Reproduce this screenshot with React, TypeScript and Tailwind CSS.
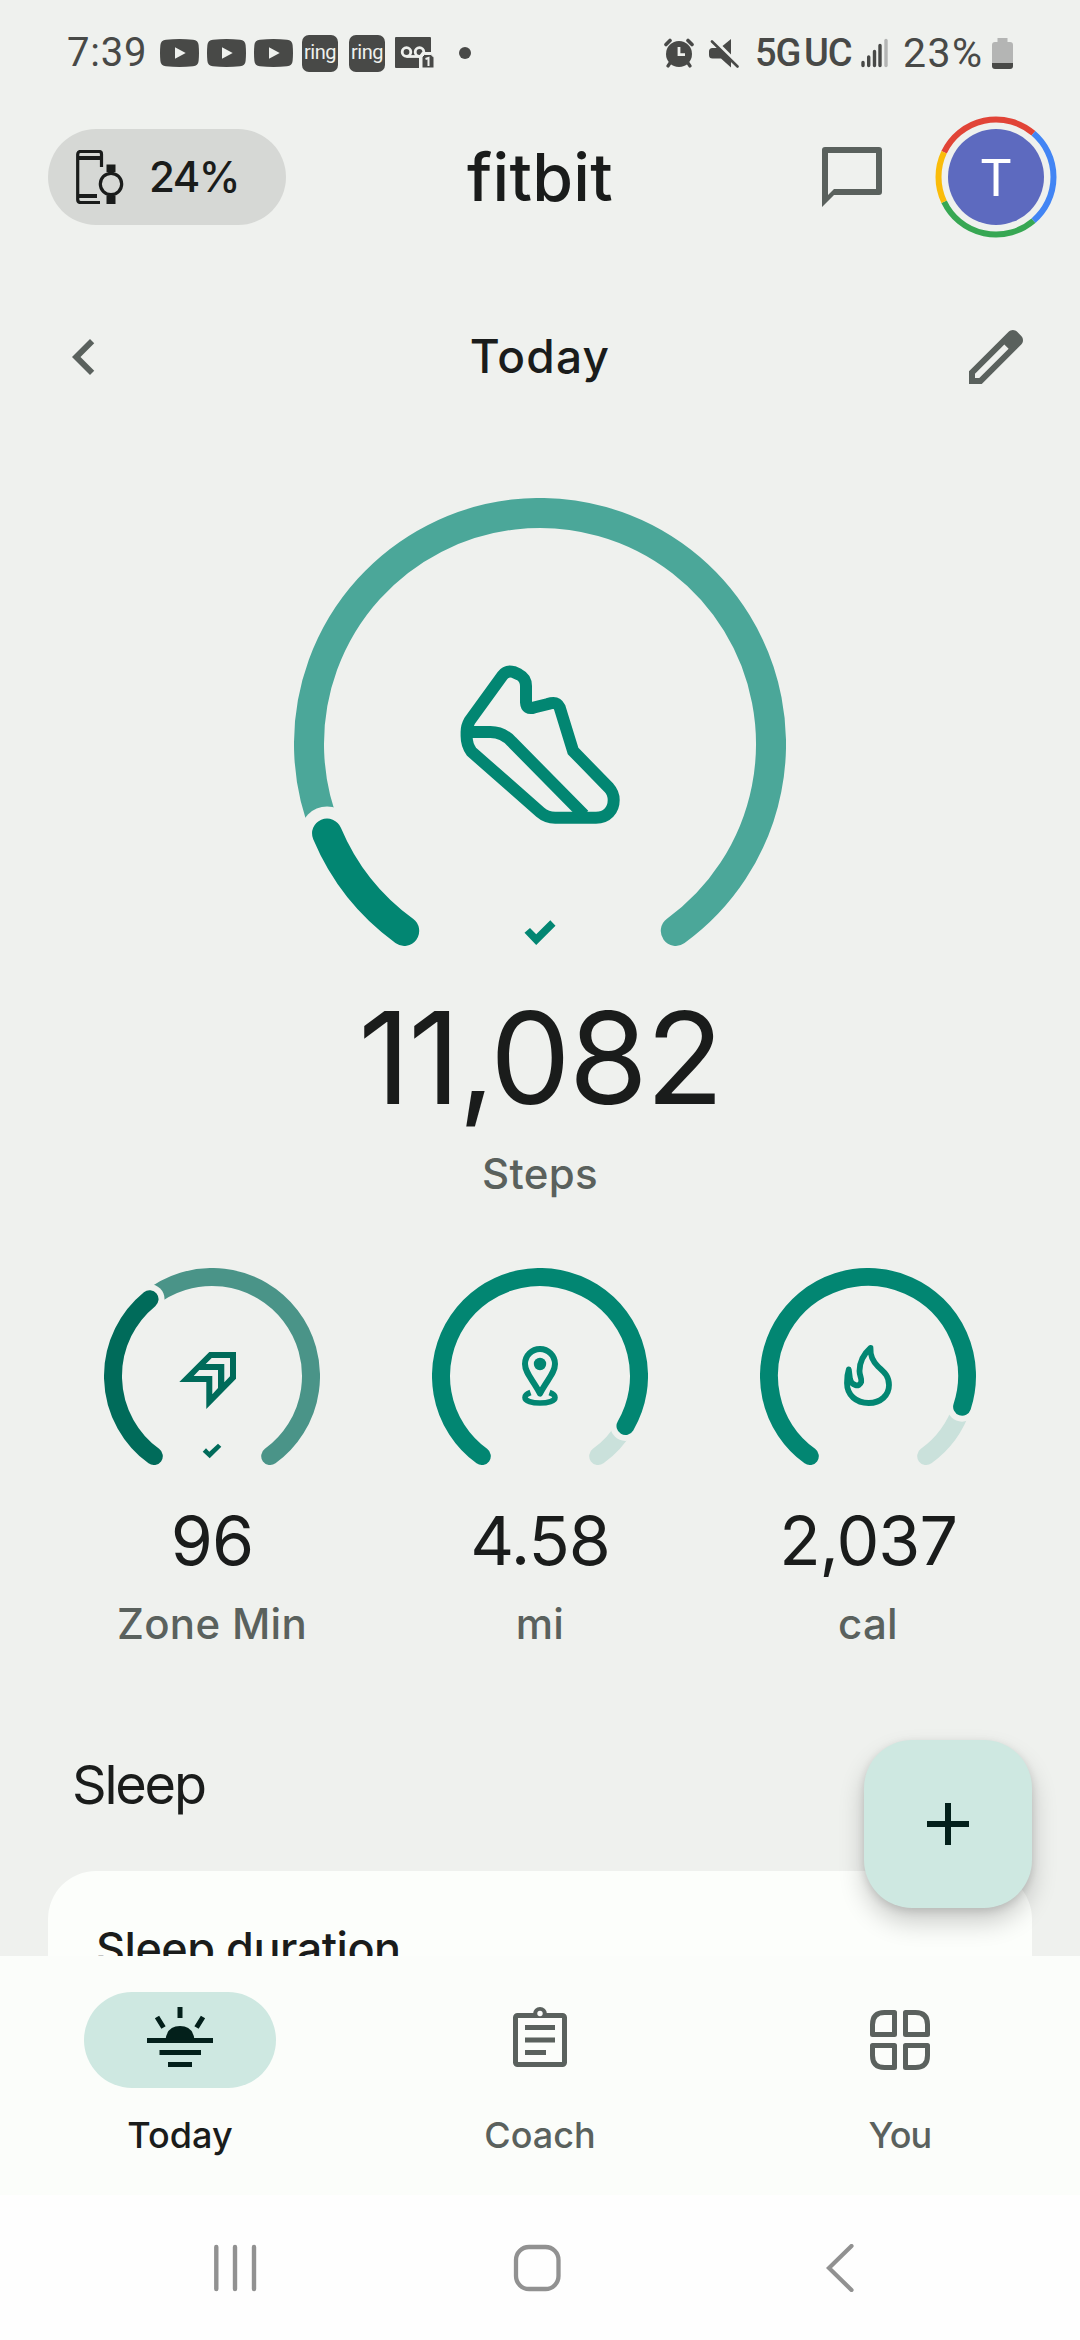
import React from 'react';

type Point = { x: number; y: number };

// Angles run clockwise from the bottom of the dial, in degrees.
const pointOnDial = (size: number, radius: number, angle: number): Point => {
  const rad = (angle * Math.PI) / 180;
  return {
    x: size / 2 - radius * Math.sin(rad),
    y: size / 2 + radius * Math.cos(rad),
  };
};

const arcPath = (size: number, radius: number, from: number, to: number) => {
  const start = pointOnDial(size, radius, from);
  const end = pointOnDial(size, radius, to);
  const large = to - from > 180 ? 1 : 0;
  return `M${start.x} ${start.y}A${radius} ${radius} 0 ${large} 1 ${end.x} ${end.y}`;
};

const START = 36;
const END = 324;

interface GaugeProps {
  size: number;
  height: number;
  stroke: number;
  gap: number;
  split: number;
  color: string;
  track: string;
  children: React.ReactNode;
}

const Gauge: React.FC<GaugeProps> = ({ size, height, stroke, gap, split, color, track, children }) => {
  const radius = (size - stroke) / 2;
  const knob = pointOnDial(size, radius, split);
  return (
    <svg width={size} height={height} viewBox={`0 0 ${size} ${height}`} fill="none" className="shrink-0">
      <path d={arcPath(size, radius, split, END)} stroke={track} strokeWidth={stroke} strokeLinecap="round" />
      <circle cx={knob.x} cy={knob.y} r={stroke / 2 + gap} fill="#eff1ee" />
      <path d={arcPath(size, radius, START, split)} stroke={color} strokeWidth={stroke} strokeLinecap="round" />
      {children}
    </svg>
  );
};

const YoutubeIcon = () => (
  <svg width="39" height="28" viewBox="0 0 39 28">
    <path
      fillRule="evenodd"
      fill="#484947"
      d="M6 .7Q19.500-.5 33 .7Q38.200 1.200 38.600 6Q39.400 14 38.600 22Q38.200 26.800 33 27.300Q19.500 28.500 6 27.300Q.8 26.800 .4 22Q-.4 14 .4 6Q.8 1.200 6 .7ZM15 8.300V19.700L25.700 14Z"
    />
  </svg>
);

const RingIcon = () => (
  <div className="flex h-[37px] w-9 justify-center rounded-[7px] bg-[#484947]">
    <span className="font-['Roboto',sans-serif] text-[20px] leading-[34px] tracking-[-0.5px] text-[#eff1ee]">ring</span>
  </div>
);

const VoicemailIcon = () => (
  <svg width="40" height="32" viewBox="0 0 40 32" fill="none">
    <path d="M1 0H35q1 0 1 1V15H27L24 19V31H1q-1 0-1-1V1q0-1 1-1Z" fill="#484947" />
    <g stroke="#eff1ee" strokeWidth="2.800">
      <circle cx="11.500" cy="15" r="4.300" />
      <circle cx="24.500" cy="15" r="4.300" />
      <path d="M11.500 19.500H24" />
    </g>
    <path d="M29.500 17.500H36L39 20.500V31H27V20Z" fill="#484947" stroke="#eff1ee" strokeWidth="1" />
    <path d="M30.500 22L33.500 21V29" stroke="#eff1ee" strokeWidth="2" />
  </svg>
);

const AlarmIcon = () => (
  <svg width="30" height="30" viewBox="0 0 30 30" fill="none" stroke="#484947">
    <circle cx="15" cy="16" r="13" fill="#484947" stroke="none" />
    <path d="M2 6.500L6 2.500M28 6.500L24 2.500" strokeWidth="3.600" strokeLinecap="round" />
    <path d="M6 25L4 28M24 25L26 28" strokeWidth="3.200" strokeLinecap="round" />
    <path d="M15 9V16.700H21" stroke="#eff1ee" strokeWidth="2.800" />
  </svg>
);

const MuteIcon = () => (
  <svg width="30" height="31" viewBox="0 0 30 31">
    <path d="M22 1V16.500L13.500 8Z" fill="#484947" />
    <path d="M3.500 10H9.500L22 22V29.500L12 20.500H3.500Q0 20.500 0 17V13.500Q0 10 3.500 10Z" fill="#484947" />
    <path d="M3 3.500L28.500 28.500" stroke="#484947" strokeWidth="2.600" strokeLinecap="round" />
  </svg>
);

const SignalIcon = () => (
  <svg width="28" height="30" viewBox="0 0 28 30" strokeWidth="3.400" strokeLinecap="round">
    <path d="M2 24.500V27.500M7.700 19V27.500M13.500 13.500V27.500M19 7.500V27.500" stroke="#484947" />
    <path d="M25 2.500V27.500" stroke="#b4b5b4" />
  </svg>
);

const BatteryIcon = () => (
  <svg width="21" height="31" viewBox="0 0 21 31">
    <path d="M5.500 0H15.500V4H18Q21 4 21 7V25H0V7Q0 4 3 4H5.500Z" fill="#b4b5b4" />
    <path d="M0 25H21V28Q21 31 18 31H3Q0 31 0 28Z" fill="#484947" />
  </svg>
);

const StatusBar = () => (
  <div className="flex h-[106px] shrink-0 items-center justify-between pr-[67px] pl-[67px] font-['Roboto',sans-serif] text-[#484947]">
    <div className="flex items-center">
      <span className="w-[93px] text-[40px] leading-none tracking-[0.8px]">7:39</span>
      <div className="flex gap-2">
        <YoutubeIcon />
        <YoutubeIcon />
        <YoutubeIcon />
      </div>
      <div className="ml-[9px] flex gap-[11px]">
        <RingIcon />
        <RingIcon />
      </div>
      <div className="ml-[10px]">
        <VoicemailIcon />
      </div>
      <div className="ml-6 h-3 w-3 rounded-full bg-[#484947]" />
    </div>
    <div className="flex items-center">
      <AlarmIcon />
      <div className="ml-[15px]">
        <MuteIcon />
      </div>
      <span className="ml-4 w-[106px] text-[38px] leading-none font-medium tracking-[-1px] [word-spacing:-5px] whitespace-nowrap">
        5G UC
      </span>
      <SignalIcon />
      <span className="ml-[14px] w-[89px] text-[41px] leading-none tracking-[1.500px]">23%</span>
      <BatteryIcon />
    </div>
  </div>
);

const DevicesIcon = () => (
  <svg width="48" height="54" viewBox="0 0 48 54" fill="none" stroke="#1a1c1b">
    <path d="M25.500 17V4Q25.500 1.500 23 1.500H4.500Q1.700 1.500 1.700 4.500V49.500Q1.700 52.500 4.500 52.500H24" strokeWidth="3.200" />
    <path d="M2 8H26M2 46H21" strokeWidth="4" />
    <circle cx="35" cy="34" r="10.700" strokeWidth="3.200" />
    <path d="M30.500 14.500H39.500V22H30.500ZM30.500 46H39.500V54H30.500Z" fill="#1a1c1b" stroke="none" />
  </svg>
);

const ChatIcon = () => (
  <svg width="72" height="72" viewBox="0 0 24 24" fill="#5a615d">
    <path d="M21 2H3Q2 2 2 3V22l4-4H21Q22 18 22 17V3Q22 2 21 2ZM20 16H6L4 18V4H20Z" />
  </svg>
);

const Avatar = () => (
  <div className="relative flex h-[122px] w-[122px] items-center justify-center">
    <svg className="absolute inset-0" width="122" height="122" viewBox="0 0 122 122" fill="none" strokeWidth="6">
      <path d={arcPath(122, 57.500, 115.400, 220.600)} stroke="#e14437" />
      <path d={arcPath(122, 57.500, 220.600, 319.400)} stroke="#4285f4" />
      <path d={arcPath(122, 57.500, 319.400, 424.600)} stroke="#37a753" />
      <path d={arcPath(122, 57.500, 64.600, 115.400)} stroke="#fabc09" />
    </svg>
    <div className="flex h-24 w-24 items-center justify-center rounded-full bg-[#5d6abf] pt-1 font-['Roboto',sans-serif] text-[52px] leading-none text-white">
      T
    </div>
  </div>
);

const Header = () => (
  <header className="grid h-[142px] shrink-0 grid-cols-[1fr_auto_1fr] items-center px-[23px]">
    <div className="ml-[25px] flex h-24 w-[238px] items-center rounded-full bg-[#d6d8d5] pl-7">
      <DevicesIcon />
      <span className="ml-[25px] text-[42px] leading-none font-medium tracking-[-1.500px]">24%</span>
    </div>
    <h1 className="text-[66px] leading-none font-medium tracking-[0.3px]">fitbit</h1>
    <div className="flex items-center justify-end gap-[47px]">
      <ChatIcon />
      <Avatar />
    </div>
  </header>
);

const DateRow = () => (
  <div className="flex h-[218px] shrink-0 items-center justify-between px-12">
    <svg width="72" height="72" viewBox="0 0 24 24" fill="#5a615d">
      <path d="M15.410 7.410L14 6l-6 6 6 6 1.410-1.410L10.830 12z" />
    </svg>
    <h2 className="pb-0.5 text-[46px] leading-none font-medium tracking-[1.200px]">Today</h2>
    <svg width="72" height="72" viewBox="0 0 24 24" fill="#5a615d">
      <path d="M5 19h1.425L16.200 9.225 14.775 7.800 5 17.575V19Zm-2 2v-4.250L16.200 3.575q.3-.275.663-.425.362-.15.762-.15t.775.15q.375.15.65.45L20.425 5q.3.275.438.65.137.375.137.75 0 .4-.137.763-.138.362-.438.662L7.250 21H3Z" />
    </svg>
  </div>
);

const StepsGauge = () => (
  <section className="mt-8 flex shrink-0 flex-col items-center">
    <Gauge size={492} height={456} stroke={30} gap={12} split={67.2} color="#028672" track="#4ba799">
      <g stroke="#028672" strokeWidth="12">
        <path d="M175.700 222.700L208.500 177.500Q212.500 172 219.500 174L225 176.500Q232 180 232 188V204.300Q232.500 212 240 209.500L254 206Q262.500 203 265.600 209.300L279.100 253L314.900 289.700Q319.700 295 319.700 302C319.700 312 313 319.700 302 319.700H261.200Q252.500 319.700 246.300 314.300L177.500 253.700Q172.600 247 172.600 238V234Q172.600 228 175.700 222.700Z" />
        <path d="M172.600 234H196.400Q209 234 218 244L290 317" />
      </g>
      <path d="M230.500 434.700L236 430L242.200 436.300L256.300 422.300L261.500 427.700L242.200 447Z" fill="#028672" />
    </Gauge>
    <span className="mt-10 text-[128px] leading-none tracking-[-2px]">11,082</span>
    <span className="mt-[31px] text-[42px] leading-none font-medium tracking-[0.3px] text-[#5a615d]">Steps</span>
  </section>
);

const ZoneIcon = () => (
  <g fill="#006b5a">
    <path
      fillRule="evenodd"
      d="M75.300 114L105.300 84H132V110.700L102.300 141V114ZM101.700 96H120.300V114.300L126 108.300V90H107.700ZM89.700 108H108.300V126.300L114 120V102H95.300Z"
    />
    <path d="M98.700 183.700L102 180.300L105.300 183.700L114 175.700L117.300 178.700L105.700 190.300Z" />
  </g>
);

const PinIcon = () => (
  <g stroke="#028672" strokeWidth="6" strokeLinejoin="round">
    <path d="M93 96A15 15 0 0 1 123 96C123 105 115 112 108 125.500C101 112 93 105 93 96Z" />
    <circle cx="108" cy="96" r="6.200" fill="#028672" stroke="none" />
    <path d="M98.500 124.500Q93 126.500 93 129.500C93 133 100 135 108 135S123 133 123 129.500Q123 126.500 117.500 124.500" strokeWidth="5.600" />
  </g>
);

const FlameIcon = () => (
  <path
    d="M110.500 80C101.500 88 99.500 96 99.500 103C99.500 108 102 110 101.200 114C99.500 119.500 91.500 118 90 111L88.800 101.500C87.300 106 87 110 87 115C87 127 96 135 108.700 135C121 135 129 127 129 117C129 107 123 103.500 118 98.500C112.500 93 110 88 110.500 80Z"
    stroke="#028672"
    strokeWidth="5.800"
    strokeLinejoin="round"
  />
);

const stats = [
  { value: '96', label: 'Zone Min', split: 140.9, color: '#006b5a', track: '#4a9488', icon: <ZoneIcon /> },
  { value: '4.58', label: 'mi', split: 300.3, color: '#028672', track: '#cae1db', icon: <PinIcon /> },
  { value: '2,037', label: 'cal', split: 288.1, color: '#028672', track: '#cae1db', icon: <FlameIcon /> },
];

const StatsRow = () => (
  <section className="mt-[73px] grid shrink-0 grid-cols-3 px-12">
    {stats.map((stat) => (
      <div key={stat.label} className="flex flex-col items-center">
        <Gauge size={216} height={200} stroke={18} gap={6} split={stat.split} color={stat.color} track={stat.track}>
          {stat.icon}
        </Gauge>
        <span className="mt-[38px] text-[68px] leading-none tracking-[-1px]">{stat.value}</span>
        <span className="mt-[29px] text-[42px] leading-none font-medium tracking-[0.3px] text-[#5a615d]">{stat.label}</span>
      </div>
    ))}
  </section>
);

const SleepSection = () => (
  <section className="mt-[113px] shrink-0 px-12">
    <h2 className="pl-6 text-[54px] leading-none tracking-[-2.200px]">Sleep</h2>
    <div className="mt-[59px] h-[300px] rounded-[48px] bg-[#fcfefb] px-12 pt-[55px]">
      <h3 className="text-[45px] leading-none font-medium tracking-[-0.500px]">Sleep duration</h3>
    </div>
  </section>
);

const TodayIcon = () => (
  <svg width="72" height="72" viewBox="0 0 72 72" fill="none" stroke="#03201b" strokeWidth="5">
    <path d="M3 36.500H69M15.500 48.500H57M24 60.500H48M36 3V14M13 13L19.500 23.500M59 13L52.500 23.500" />
    <path d="M21.500 36Q23 22 36 22T50.500 36Z" fill="#03201b" stroke="none" />
  </svg>
);

const CoachIcon = () => (
  <svg width="72" height="72" viewBox="0 0 72 72" fill="none" stroke="#5a615d" strokeWidth="5">
    <rect x="11.500" y="11.500" width="49" height="49" rx="2" />
    <path d="M21 23.500H51M21 36H51M21 48.500H42" />
    <path d="M29 10A7 7 0 0 1 43 10V13H29Z" fill="#5a615d" stroke="none" />
    <circle cx="36" cy="9.500" r="2.700" fill="#fbfdfa" stroke="none" />
  </svg>
);

const YouIcon = () => (
  <svg width="72" height="72" viewBox="0 0 72 72" fill="none" stroke="#5a615d" strokeWidth="5" strokeLinejoin="round">
    <path d="M30.500 8.500V30.500H8.500V20.500Q8.500 8.500 20.500 8.500Z" />
    <path d="M41.500 8.500V30.500H63.500V20.500Q63.500 8.500 51.500 8.500Z" />
    <path d="M30.500 63.500V41.500H8.500V51.500Q8.500 63.500 20.500 63.500Z" />
    <path d="M41.500 63.500V41.500H63.500V51.500Q63.500 63.500 51.500 63.500Z" />
  </svg>
);

const BottomNav = () => (
  <nav className="grid h-[239px] shrink-0 grid-cols-3 bg-[#fbfdfa] pt-9 text-[36px] leading-none font-medium text-[#5a615d]">
    <div className="flex flex-col items-center">
      <div className="flex h-24 w-48 items-center justify-center rounded-full bg-[#cee8e1]">
        <TodayIcon />
      </div>
      <span className="mt-[29px] text-[#1a1c1b]">Today</span>
    </div>
    <div className="flex flex-col items-center">
      <div className="flex h-24 items-center">
        <CoachIcon />
      </div>
      <span className="mt-[29px]">Coach</span>
    </div>
    <div className="flex flex-col items-center">
      <div className="flex h-24 items-center">
        <YouIcon />
      </div>
      <span className="mt-[29px] tracking-[-0.800px]">You</span>
    </div>
  </nav>
);

const SystemNav = () => (
  <div className="flex h-[145px] shrink-0 items-center bg-[#fefefe] pl-[213px]">
    <svg width="44" height="48" viewBox="0 0 44 48" stroke="#919191" strokeWidth="4.400" strokeLinecap="round">
      <path d="M3.300 3V45M22 3V45M41 3V45" />
    </svg>
    <svg className="ml-64" width="48" height="48" viewBox="0 0 48 48" fill="none" stroke="#919191" strokeWidth="4.300">
      <rect x="3" y="3" width="42.500" height="42" rx="13" />
    </svg>
    <svg className="ml-[264px]" width="30" height="48" viewBox="0 0 30 48" fill="none" stroke="#919191" strokeWidth="4.200" strokeLinecap="round">
      <path d="M26.500 2L4 24L26.500 46" />
    </svg>
  </div>
);

export default function App() {
  return (
    <div className="flex h-[2340px] w-[1080px] flex-col overflow-hidden bg-[#eff1ee] font-['Inter',sans-serif] text-[#1a1c1b]">
      <main className="relative flex h-[1956px] shrink-0 flex-col overflow-hidden">
        <StatusBar />
        <Header />
        <DateRow />
        <StepsGauge />
        <StatsRow />
        <SleepSection />
        <button className="absolute right-12 bottom-12 flex h-[168px] w-[168px] items-center justify-center rounded-[48px] bg-[#cee8e1] shadow-[0_14px_26px_rgba(0,0,0,0.2),0_3px_8px_rgba(0,0,0,0.12)]">
          <svg width="42" height="42" viewBox="0 0 42 42" stroke="#03201b" strokeWidth="6">
            <path d="M21 0V42M0 21H42" />
          </svg>
        </button>
      </main>
      <BottomNav />
      <SystemNav />
    </div>
  );
}
